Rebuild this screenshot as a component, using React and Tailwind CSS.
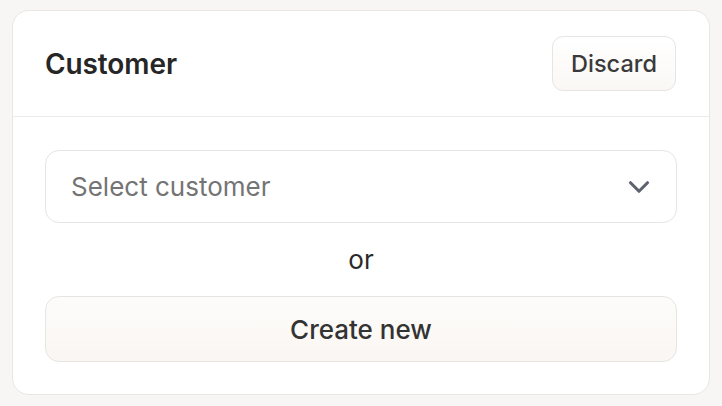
import { ChevronDown } from "lucide-react";

export default function App() {
  return (
    <div
      className="w-[722px] h-[406px] bg-[#f7f6f4] pt-[10px] px-[12px]"
      style={{ fontFamily: "Inter, 'Noto Sans', sans-serif" }}
    >
      <div className="h-[385px] bg-white border border-[#e8e7e5] rounded-[17px] flex flex-col">
        <div className="h-[106px] flex items-center justify-between pl-[32px] pr-[33px] border-b border-[#ebebea]">
          <h1 className="text-[28px] font-semibold text-[#262626] tracking-[-0.1px]">Customer</h1>
          <button className="h-[55px] w-[124px] rounded-[11px] border border-[#e6e5e3] bg-gradient-to-b from-white to-[#faf8f5] text-[23.5px] font-medium text-[#3a3a3a]">
            Discard
          </button>
        </div>

        <div className="px-[32px] pt-[33px] flex flex-col">
          <button className="h-[73px] w-full rounded-[14px] border border-[#e6e5e3] bg-white flex items-center justify-between pl-[25px] pr-[20px]">
            <span className="text-[26px] text-[#747474]">Select customer</span>
            <ChevronDown className="w-[34px] h-[34px] text-[#5f6370]" strokeWidth={2.2} />
          </button>
          <div className="h-[73px] flex items-center justify-center text-[26px] text-[#2a2a2a]">or</div>
          <button className="h-[66px] w-full rounded-[14px] border border-[#e6e5e3] bg-gradient-to-b from-[#fdfcfb] to-[#faf6f2] text-[26px] font-medium text-[#333]">
            Create new
          </button>
        </div>
      </div>
    </div>
  );
}
